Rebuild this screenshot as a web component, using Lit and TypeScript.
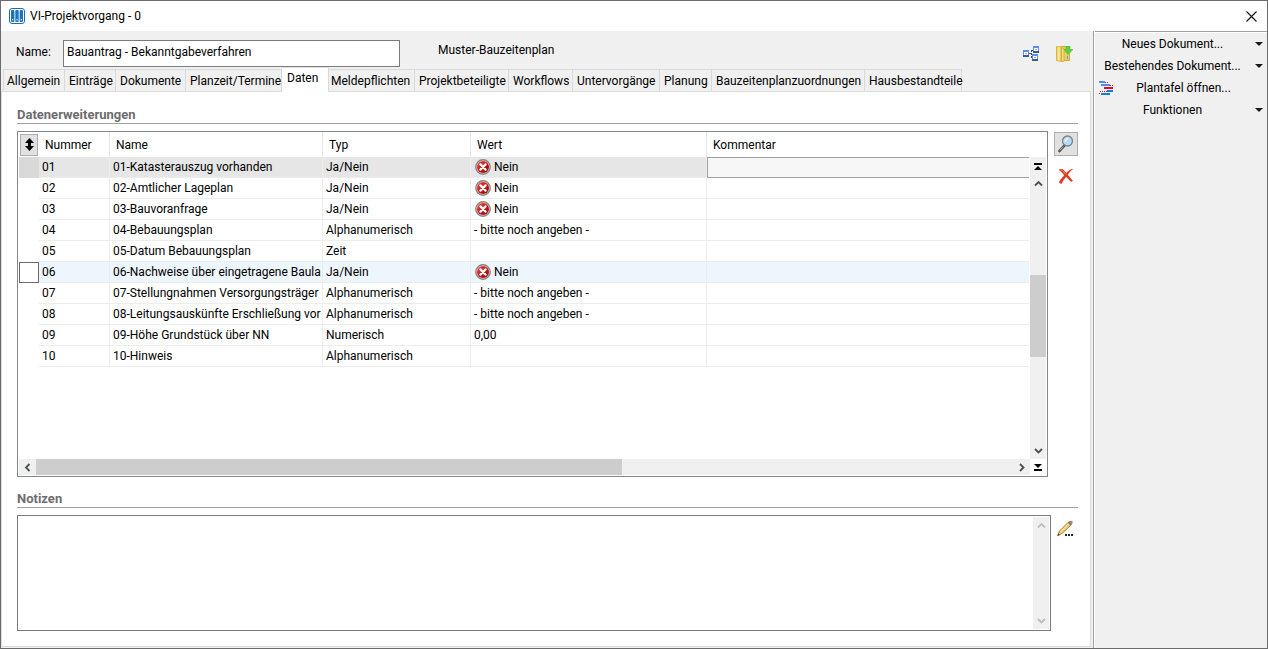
import { LitElement, html, svg, css } from "lit";
import { customElement, property, state } from "lit/decorators.js";
import { classMap } from "lit/directives/class-map.js";

interface Row {
  no: string;
  name: string;
  type: string;
  value: string;
  comment?: string;
}

const ROWS: Row[] = [
  { no: "01", name: "01-Katasterauszug vorhanden", type: "Ja/Nein", value: "Nein" },
  { no: "02", name: "02-Amtlicher Lageplan", type: "Ja/Nein", value: "Nein" },
  { no: "03", name: "03-Bauvoranfrage", type: "Ja/Nein", value: "Nein" },
  { no: "04", name: "04-Bebauungsplan", type: "Alphanumerisch", value: "- bitte noch angeben -" },
  { no: "05", name: "05-Datum Bebauungsplan", type: "Zeit", value: "" },
  { no: "06", name: "06-Nachweise über eingetragene Baulas", type: "Ja/Nein", value: "Nein" },
  { no: "07", name: "07-Stellungnahmen Versorgungsträger", type: "Alphanumerisch", value: "- bitte noch angeben -" },
  { no: "08", name: "08-Leitungsauskünfte Erschließung vor", type: "Alphanumerisch", value: "- bitte noch angeben -" },
  { no: "09", name: "09-Höhe Grundstück über NN", type: "Numerisch", value: "0,00" },
  { no: "10", name: "10-Hinweis", type: "Alphanumerisch", value: "" },
];

const TABS = [
  "Allgemein", "Einträge", "Dokumente", "Planzeit/Termine", "Daten", "Meldepflichten",
  "Projektbeteiligte", "Workflows", "Untervorgänge", "Planung", "Bauzeitenplanzuordnungen",
  "Hausbestandteile",
];

const CHEVRONS: Record<string, string> = {
  up: "M1 6.5 4.5 3 8 6.5",
  down: "M1 3 4.5 6.5 8 3",
  left: "M6.5 1 3 4.5 6.5 8",
  right: "M3 1 6.5 4.5 3 8",
};

const chevron = (dir: string) => html`
  <svg width="9" height="9" viewBox="0 0 9 9" fill="none" stroke="currentColor" stroke-width="1.8">
    <path d=${CHEVRONS[dir]} />
  </svg>`;

const logoIcon = html`
  <svg width="16" height="16" viewBox="0 0 16 16">
    <rect x="0.5" y="0.5" width="15" height="15" rx="2.5" fill="#fff" stroke="#1c6cb0" />
    <g fill="#1d74bb">
      <rect x="2" y="2" width="3.4" height="12" rx="1" />
      <rect x="6.3" y="2" width="3.4" height="12" rx="1" />
      <rect x="10.6" y="2" width="3.4" height="12" rx="1" />
    </g>
    <g fill="#fff">
      <rect x="3.2" y="11" width="1" height="1.4" />
      <rect x="7.5" y="11" width="1" height="1.4" />
      <rect x="11.8" y="11" width="1" height="1.4" />
    </g>
  </svg>`;

const treeNode = (x: number, y: number) => svg`
  <rect x=${x} y=${y} width="6" height="7" fill="#3f5688" />
  <rect x=${x} y=${y} width="6" height="5" fill="#5b8df0" />
  <rect x=${x + 1} y=${y + 2} width="4" height="3" fill="#fff" />
  <rect x=${x + 2} y=${y + 3} width="2" height="1" fill="#8fb0e8" />`;

const treeIcon = html`
  <svg width="17" height="16" viewBox="0 0 17 16">
    <path d="M6 7.5H8M8.5 4V13M8.5 4.5H11M8.5 11.5H10" fill="none" stroke="#3a4a74" stroke-dasharray="2 1" />
    ${treeNode(0, 4)} ${treeNode(10, 0)} ${treeNode(9, 8)}
  </svg>`;

const folderIcon = html`
  <svg width="17" height="16" viewBox="0 0 17 16">
    <defs>
      <linearGradient id="fold" x1="0" x2="1">
        <stop offset="0" stop-color="#e8c84e" />
        <stop offset="0.5" stop-color="#fbf0a8" />
        <stop offset="1" stop-color="#d5ae32" />
      </linearGradient>
    </defs>
    <path d="M5 0.5H13.5V14.5H5Z" fill="#e9ce62" stroke="#d3ab36" />
    <path d="M0.5 0.5 5.5 1V15.5L0.5 14.5Z" fill="url(#fold)" stroke="#d9b43c" />
    <path d="M5.5 2 8 2.5V15.5L5.5 15.5Z" fill="#f3dd7c" stroke="#c99f2a" stroke-width="0.6" />
    <path d="M11.5 10V13" stroke="#5c9ae0" />
    <path d="M10 0H14V3.5H17L12 8.5 8 3.5H10Z" fill="#5fcf3c" stroke="#3fae2a" stroke-width="0.5" />
  </svg>`;

const ganttIcon = html`
  <svg width="15" height="15" viewBox="0 0 15 15">
    <rect x="0" y="0" width="6" height="2" fill="#4d8bff" />
    <rect x="2" y="3" width="9" height="2" fill="#4d8bff" />
    <rect x="5" y="6" width="9" height="2" fill="#e80c0c" />
    <rect x="8" y="9" width="6" height="2" fill="#0a83e8" />
    <rect x="2" y="12" width="9" height="2" fill="#0a83e8" />
    <path d="M6 1.5H10M11 4.5H14M1 10.5H8M0 12.5H2" stroke="#e80c0c" stroke-dasharray="1 1" />
  </svg>`;

const errorIcon = html`
  <svg width="16" height="16" viewBox="0 0 16 16">
    <defs>
      <linearGradient id="red" x1="0" y1="0" x2="1" y2="1">
        <stop offset="0" stop-color="#e8574f" />
        <stop offset="0.5" stop-color="#cc1414" />
        <stop offset="1" stop-color="#8e0606" />
      </linearGradient>
    </defs>
    <circle cx="8" cy="8" r="7.2" fill="#f2dede" stroke="#858585" stroke-width="1.4" />
    <circle cx="8" cy="8" r="6" fill="url(#red)" />
    <path d="M5.4 5.4 10.6 10.6M10.6 5.4 5.4 10.6" stroke="#fff" stroke-width="2.2" stroke-linecap="round" />
  </svg>`;

const magnifierIcon = html`
  <svg width="16" height="18" viewBox="0 0 16 18">
    <path d="M1.5 16 6.5 10.5" stroke="#444" stroke-width="2.6" stroke-linecap="round" />
    <path d="M1.8 15.6 5.5 11.5" stroke="#ddd" stroke-width="0.8" />
    <circle cx="9.5" cy="6" r="5" fill="#b5dafb" stroke="#7d8289" stroke-width="1.3" />
    <path d="M6.5 6.5C6.5 4 8.5 2.8 11 3.2 9.5 4 8.5 5 8.2 7Z" fill="#e9f5ff" />
  </svg>`;

const deleteIcon = html`
  <svg width="16" height="16" viewBox="0 0 16 16">
    <path d="M0.500 1.800C3 .4 4.800 .8 6 2.300L8.200 5C10 3 12.500 1.200 15.500 .8 12.800 3 11 4.800 9.800 6.800L15 13 13 13.700 8.200 9C6.300 11 4.800 13 3.800 15.600 2.500 16 1 15 1 14 2.800 11 4.500 9 6.200 7.200 4.800 5.200 3 3.500 .5 1.800Z" fill="#dd3a22" />
    <path d="M3 2C4 1.800 4.800 2.500 6 4L8 6.500" fill="none" stroke="#f59a86" stroke-width="0.7" />
  </svg>`;

const pencilIcon = html`
  <svg width="17" height="17" viewBox="0 0 17 17">
    <path d="M0.800 15.500 2.500 11 11 2.500 13.800 5.200 5 13.500Z" fill="#f4cf6c" stroke="#8a6430" stroke-width="0.8" />
    <path d="M3.500 12 12 3.600" stroke="#fdeeb4" />
    <path d="M11 2.500 12 1.500 14.800 4.200 13.800 5.200Z" fill="#5a9a5c" stroke="#4b6f52" stroke-width="0.500" />
    <path d="M12 1.500C13 .3 15 .4 15.600 1.600 16 2.600 15.500 3.600 14.800 4.200Z" fill="#e0686c" />
    <path d="M0.500 16 1.200 13.600 2.800 15Z" fill="#4a3418" />
    <path d="M8 14H10V16H8ZM11 14H13V16H11ZM14 14H16V16H14Z" fill="#222" />
  </svg>`;

/** Windows-style scroll bar: two arrow buttons with a track and an optional thumb between them. */
@customElement("app-scrollbar")
class AppScrollbar extends LitElement {
  @property() direction: "vertical" | "horizontal" = "vertical";
  @property({ type: Number }) before = 0;
  @property({ type: Number }) size = 0;
  @property({ type: Boolean }) inactive = false;

  static styles = css`
    :host {
      display: block;
      min-width: 0;
      min-height: 0;
      background: #f0f0f0;
      color: #505050;
    }
    .bar {
      display: flex;
      height: 100%;
      align-items: stretch;
    }
    .vertical {
      flex-direction: column;
    }
    .inactive {
      color: #bdbdbd;
    }
    button {
      flex: none;
      display: flex;
      align-items: center;
      justify-content: center;
      min-width: 15px;
      min-height: 17px;
      padding: 0;
      border: 0;
      background: none;
      color: inherit;
    }
    .horizontal button {
      min-height: 0;
      width: 17px;
    }
    .track {
      flex: 1;
      display: flex;
      flex-direction: inherit;
      min-width: 0;
      min-height: 0;
    }
    .thumb {
      background: #cdcdcd;
    }
  `;

  render() {
    const vertical = this.direction === "vertical";
    return html`
      <div class=${classMap({ bar: true, vertical, horizontal: !vertical, inactive: this.inactive })}>
        <button aria-label="Zurück">${chevron(vertical ? "up" : "left")}</button>
        <div class="track">
          <div style="flex: 0 0 ${this.before}%"></div>
          <div class="thumb" style="flex: 0 0 ${this.size}%"></div>
        </div>
        <button aria-label="Weiter">${chevron(vertical ? "down" : "right")}</button>
      </div>`;
  }
}

@customElement("app-root")
class AppRoot extends LitElement {
  @state() private activeTab = "Daten";

  static styles = css`
    :host {
      display: flex;
      flex-direction: column;
      box-sizing: border-box;
      height: 100vh;
      border: 1px solid #6b6b6b;
      background: #f0f0f0;
      color: #000;
      font: 12px/16px "Segoe UI", Roboto, sans-serif;
    }
    * {
      box-sizing: border-box;
    }
    svg {
      display: block;
      flex: none;
    }
    button,
    input,
    textarea {
      font: inherit;
      color: inherit;
      border-radius: 0;
      outline: none;
    }
    button {
      padding: 0;
      border: 0;
      background: none;
    }
    .titlebar {
      flex: none;
      display: flex;
      align-items: center;
      gap: 5px;
      height: 30px;
      padding: 0 10px 0 8px;
      background: #fff;
    }
    .title {
      flex: 1;
      margin: 0;
      font: inherit;
    }
    .body {
      flex: 1;
      min-height: 0;
      display: grid;
      grid-template-columns: minmax(0, 1fr) 174px;
    }
    .main {
      display: flex;
      flex-direction: column;
      min-height: 0;
      padding: 9px 2px 1px 0;
    }
    .head {
      flex: none;
      display: flex;
      align-items: center;
      height: 27px;
      padding: 0 18px 0 15px;
    }
    .head label {
      width: 47px;
      padding-bottom: 4px;
    }
    .head input {
      width: 337px;
      height: 27px;
      padding: 0 3px 4px;
      border: 1px solid #7a7a7a;
      background: #fff;
    }
    .plan {
      flex: 1;
      padding: 0 0 8px 38px;
    }
    .headicons {
      display: flex;
      gap: 16px;
    }
    .tabs {
      flex: none;
      display: grid;
      grid-template-columns: 62px 51px 70px 96px 47px 86px 94px 64px 87px 52px 153px 97px;
      height: 25px;
      padding-left: 2px;
      align-items: end;
    }
    .tab {
      height: 23px;
      text-align: left;
      white-space: nowrap;
      padding: 0 0 0 4px;
      border: 1px solid #d9d9d9;
      border-left-width: 0;
    }
    .tab:first-child {
      border-left-width: 1px;
      padding-left: 3px;
    }
    .active {
      z-index: 1;
      height: 25px;
      padding: 0 0 3px 5px;
      background: #fff;
      border-bottom-color: #fff;
      border-top-color: #e3e3e3;
    }
    .active + .tab {
      padding-left: 2px;
    }
    .panel {
      flex: 1;
      min-height: 0;
      display: flex;
      flex-direction: column;
      margin-top: -1px;
      padding: 14px 12px 15px 15px;
      background: #fff;
      border: 1px solid #dcdcdc;
    }
    .heading {
      flex: none;
      height: 18px;
      margin: 0 0 7px;
      border-bottom: 1px solid #a0a0a0;
      color: #6d6d6d;
      font-size: 13px;
      line-height: 17px;
      font-weight: 700;
    }
    .section {
      display: grid;
      grid-template-columns: minmax(0, 1fr) 24px;
      column-gap: 6px;
    }
    .data {
      flex: 1;
      min-height: 0;
      margin-bottom: 13px;
    }
    .listbox {
      display: grid;
      grid-template: minmax(0, 1fr) 16px / minmax(0, 1fr) 16px;
      padding: 0 1px 1px;
      border: 1px solid #828790;
      min-height: 0;
    }
    .view {
      overflow: hidden;
      padding-right: 1px;
    }
    table {
      width: 100%;
      table-layout: fixed;
      border-collapse: separate;
      border-spacing: 0;
    }
    .c0 { width: 20px; }
    .c1 { width: 71px; }
    .c2 { width: 213px; }
    .c3 { width: 148px; }
    .c4 { width: 236px; }
    th {
      height: 25px;
      padding: 0 0 0 6px;
      text-align: left;
      font-weight: 400;
      border-right: 1px solid #e5e5e5;
    }
    td {
      height: 21px;
      padding: 0 1px 0 3px;
      border: solid #ededed;
      border-width: 0 1px 1px 0;
    }
    th:last-child,
    td:last-child {
      border-right: 0;
    }
    .corner,
    .marker {
      padding: 0;
      border: 0;
    }
    .sort {
      display: flex;
      align-items: center;
      justify-content: center;
      width: 18px;
      height: 22px;
      margin-left: 1px;
      border: 1px solid #adadad;
      background: #e1e1e1;
    }
    .clip {
      overflow: hidden;
      white-space: nowrap;
      height: 16px;
    }
    .value {
      display: flex;
      align-items: center;
      gap: 3px;
      height: 20px;
    }
    .flag {
      padding-left: 1px;
    }
    .selected td {
      background: #e6e6e6;
    }
    .selected .marker {
      background: #d9d9d9;
    }
    .selected .comment {
      padding: 0;
      border: 0;
    }
    .comment input {
      display: block;
      width: 100%;
      height: 21px;
      padding: 0 3px;
      border: 1px solid #a0a0a0;
      border-right: 0;
      background: #f7f7f7;
    }
    .hover td {
      background: #eef6fd;
    }
    .hover .marker {
      border: 1px solid #6b6b6b;
      background: #fff;
    }
    .side {
      display: flex;
      flex-direction: column;
      align-items: stretch;
      margin-top: 25px;
      min-height: 0;
      background: #f0f0f0;
    }
    .side app-scrollbar {
      flex: 1;
    }
    .jump {
      flex: none;
      display: flex;
      align-items: center;
      justify-content: center;
      width: 16px;
      height: 18px;
    }
    .jump.low {
      height: 16px;
    }
    .tools {
      display: flex;
      flex-direction: column;
      align-items: center;
      gap: 12px;
      padding-top: 1px;
    }
    .search {
      display: flex;
      align-items: center;
      justify-content: center;
      width: 24px;
      height: 24px;
      border: 1px solid #adadad;
      background: #e1e1e1;
    }
    .notes {
      column-gap: 3px;
      flex: none;
      height: 116px;
    }
    .notes .tools {
      align-items: flex-start;
      padding: 5px 0 0 3px;
    }
    .notebox {
      display: grid;
      grid-template-columns: minmax(0, 1fr) 16px;
      padding: 1px;
      border: 1px solid #7a7a7a;
    }
    textarea {
      resize: none;
      border: 0;
      padding: 2px 4px;
      overflow: hidden;
      background: #fff;
    }
    .menu {
      display: flex;
      flex-direction: column;
      padding-top: 2px;
      border-left: 1px solid #a0a0a0;
      box-shadow: inset 1px 0 #fff, inset 0 1px #a0a0a0, inset 0 2px #fff;
    }
    .item {
      display: grid;
      grid-template-columns: 22px 1fr 14px;
      align-items: center;
      height: 22px;
      padding: 0 4px 0 2px;
      text-align: center;
    }
    .wide {
      grid-column: span 2;
    }
    .arrow {
      justify-self: end;
    }
    .ganttcell {
      padding-left: 3px;
    }
  `;

  private renderRow(row: Row, index: number) {
    const selected = index === 0;
    return html`
      <tr class=${classMap({ selected, hover: index === 5 })}>
        <td class="marker"></td>
        <td>${row.no}</td>
        <td><div class="clip">${row.name}</div></td>
        <td>${row.type}</td>
        <td>
          ${row.type === "Ja/Nein"
            ? html`<div class="value flag">${errorIcon}${row.value}</div>`
            : row.value}
        </td>
        <td class="comment">
          ${selected ? html`<input type="text" aria-label="Kommentar" .value=${row.comment ?? ""} />` : ""}
        </td>
      </tr>`;
  }

  private renderMenuItem(label: string, icon: unknown = null) {
    return html`
      <button class="item">
        ${icon
          ? html`<span class="ganttcell">${icon}</span><span>${label}</span>`
          : html`
              <span class="wide">${label}</span>
              <svg class="arrow" width="8" height="4" viewBox="0 0 8 4"><path d="M0 0H8L4 4Z" fill="#1a1a1a" /></svg>
            `}
      </button>`;
  }

  render() {
    return html`
      <header class="titlebar">
        ${logoIcon}
        <h1 class="title">VI-Projektvorgang - 0</h1>
        <button class="close" aria-label="Schließen">
          <svg width="11" height="11" viewBox="0 0 11 11">
            <path d="M0.500 0.500 10.500 10.500M10.500 0.500 0.500 10.500" stroke="#111" stroke-width="1.1" />
          </svg>
        </button>
      </header>
      <div class="body">
        <main class="main">
          <div class="head">
            <label for="name">Name:</label>
            <input id="name" type="text" value="Bauantrag - Bekanntgabeverfahren" />
            <span class="plan">Muster-Bauzeitenplan</span>
            <div class="headicons">
              <button aria-label="Struktur">${treeIcon}</button>
              <button aria-label="Ablegen">${folderIcon}</button>
            </div>
          </div>
          <div class="tabs" role="tablist">
            ${TABS.map(
              (t) => html`
                <button
                  role="tab"
                  aria-selected=${t === this.activeTab}
                  class=${classMap({ tab: true, active: t === this.activeTab })}
                  @click=${() => (this.activeTab = t)}
                >${t}</button>`
            )}
          </div>
          <div class="panel" role="tabpanel">
            <h2 class="heading">Datenerweiterungen</h2>
            <div class="section data">
              <div class="listbox">
                <div class="view">
                  <table>
                    <colgroup>
                      <col class="c0" /><col class="c1" /><col class="c2" />
                      <col class="c3" /><col class="c4" /><col />
                    </colgroup>
                    <thead>
                      <tr>
                        <th class="corner">
                          <button class="sort" aria-label="Sortieren">
                            <svg width="9" height="13" viewBox="0 0 9 13">
                              <path d="M4.500 0 9 5H6V8H9L4.500 13 0 8H3V5H0Z" fill="#000" />
                            </svg>
                          </button>
                        </th>
                        <th>Nummer</th>
                        <th>Name</th>
                        <th>Typ</th>
                        <th>Wert</th>
                        <th>Kommentar</th>
                      </tr>
                    </thead>
                    <tbody>
                      ${ROWS.map((r, i) => this.renderRow(r, i))}
                    </tbody>
                  </table>
                </div>
                <div class="side">
                  <button class="jump" aria-label="Zum Anfang">
                    <svg width="8" height="7" viewBox="0 0 8 7">
                      <path d="M0 0H8V2H0ZM4 3 8 7H0Z" fill="#000" />
                    </svg>
                  </button>
                  <app-scrollbar before="33" size="33"></app-scrollbar>
                </div>
                <app-scrollbar direction="horizontal" before="0" size="60"></app-scrollbar>
                <button class="jump low" aria-label="Zum Ende">
                  <svg width="8" height="7" viewBox="0 0 8 7">
                    <path d="M0 5H8V7H0ZM0 0H8L4 4Z" fill="#000" />
                  </svg>
                </button>
              </div>
              <div class="tools">
                <button class="search" aria-label="Suchen">${magnifierIcon}</button>
                <button aria-label="Löschen">${deleteIcon}</button>
              </div>
            </div>
            <h2 class="heading">Notizen</h2>
            <div class="section notes">
              <div class="notebox">
                <textarea aria-label="Notizen"></textarea>
                <app-scrollbar inactive></app-scrollbar>
              </div>
              <div class="tools">
                <button aria-label="Bearbeiten">${pencilIcon}</button>
              </div>
            </div>
          </div>
        </main>
        <nav class="menu">
          ${this.renderMenuItem("Neues Dokument...")}
          ${this.renderMenuItem("Bestehendes Dokument...")}
          ${this.renderMenuItem("Plantafel öffnen...", ganttIcon)}
          ${this.renderMenuItem("Funktionen")}
        </nav>
      </div>
    `;
  }
}
